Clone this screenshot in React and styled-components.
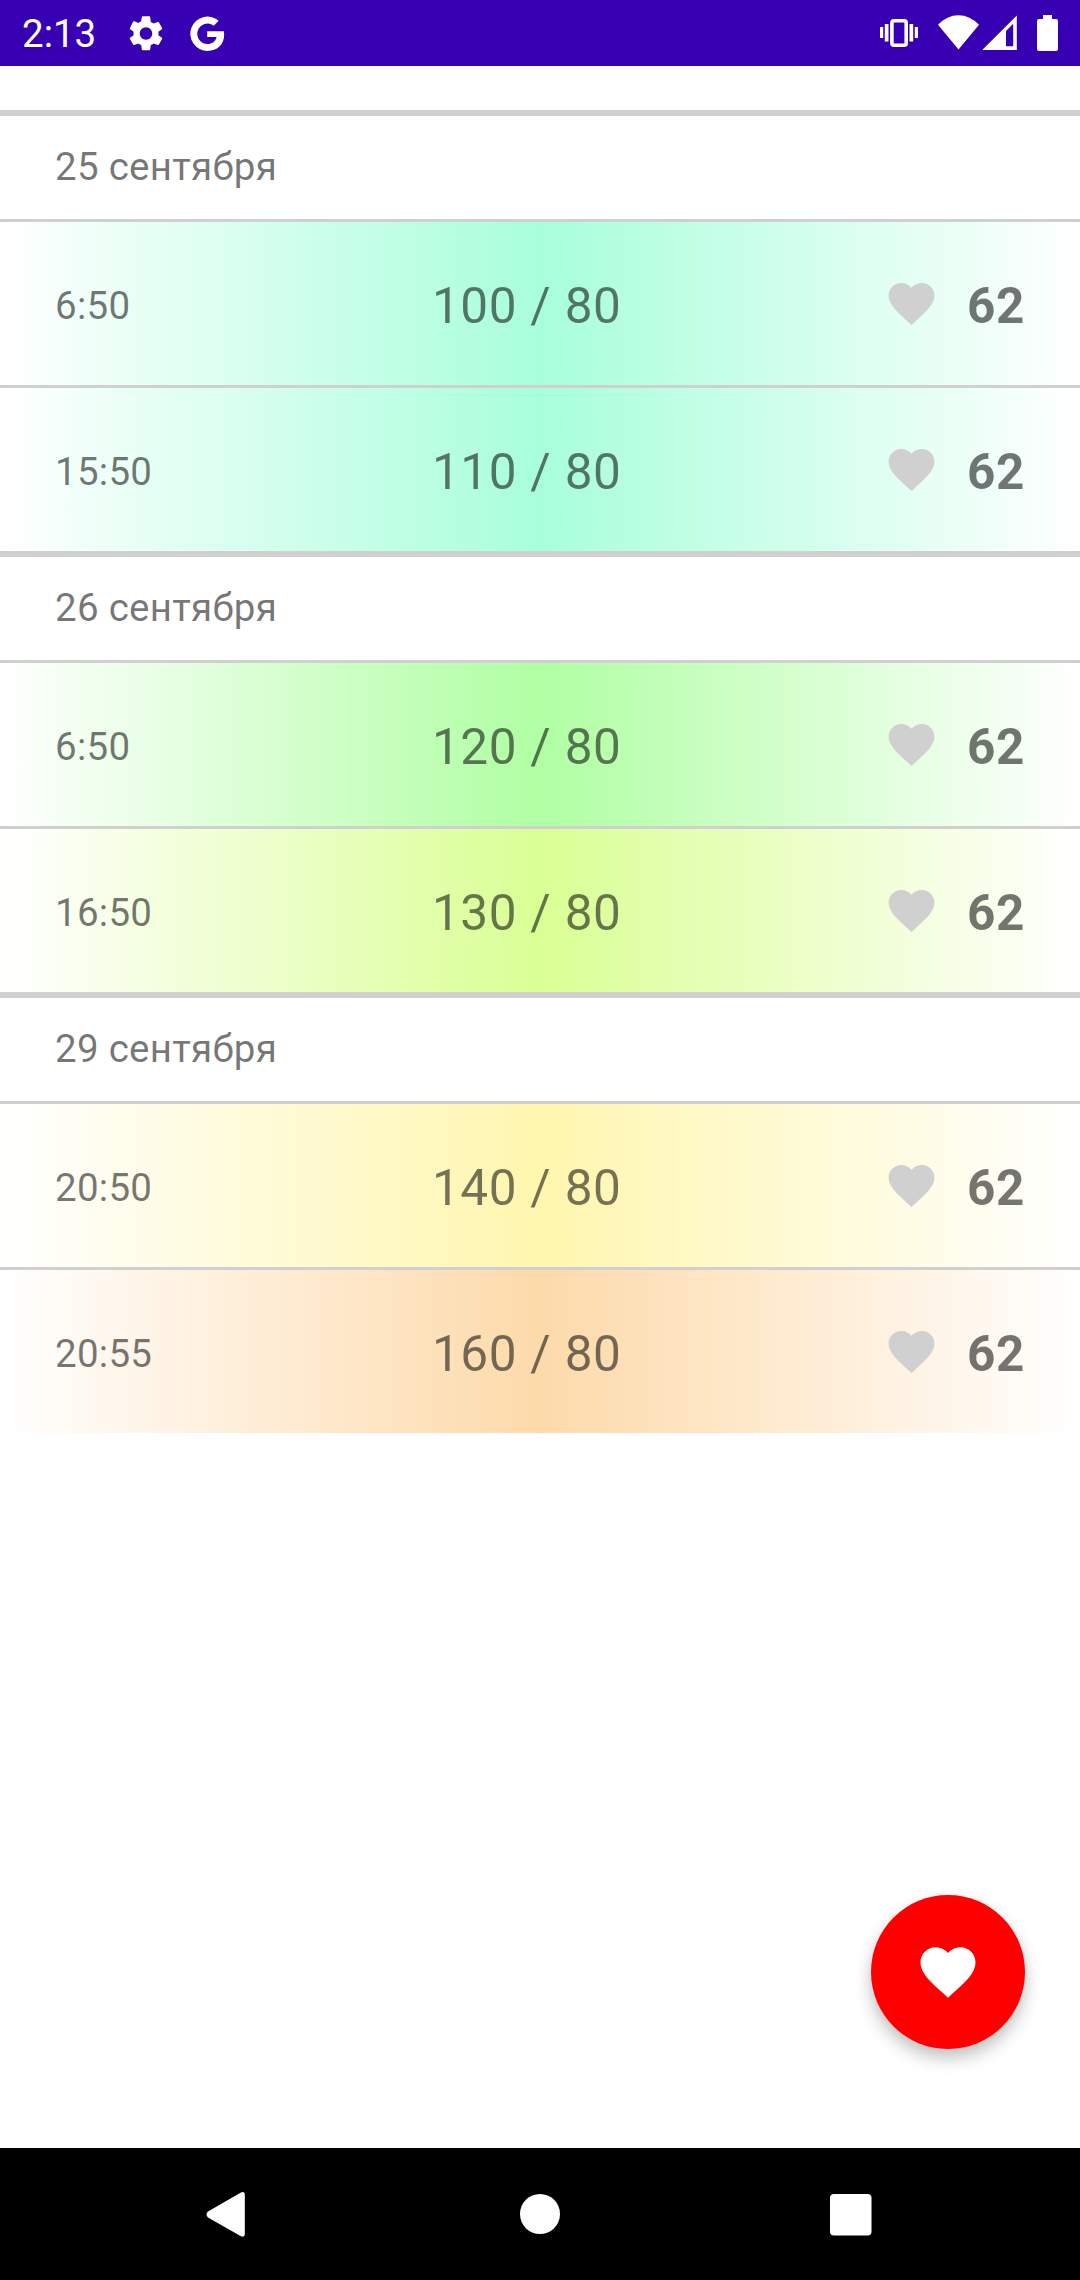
import React from "react";
import styled, { createGlobalStyle } from "styled-components";

const GlobalStyle = createGlobalStyle`
  body { margin: 0; background: #fff; font-family: Roboto, "Noto Sans", sans-serif; }
  * { box-sizing: border-box; }
`;

const Screen = styled.div`
  display: flex;
  flex-direction: column;
  width: 1080px;
  height: 2280px;
  background: #fff;
  position: relative;
  overflow: hidden;
`;

const StatusBar = styled.header`
  display: flex;
  align-items: center;
  height: 66px;
  flex: none;
  padding: 0 22px;
  background: #3700b3;
  color: #fff;
`;

const Clock = styled.span`
  font-size: 38.5px;
  line-height: 66px;
  width: 107px;
  padding-top: 2px;
`;

const StatusIcon = styled.svg`
  display: block;
  flex: none;
  width: ${(p) => p.$w}px;
  height: ${(p) => p.$h || p.$w}px;
  margin-left: ${(p) => p.$gap || 0}px;
  fill: currentColor;
`;

const Spacer = styled.div`
  flex: 1;
`;

const List = styled.main`
  flex: 1;
  padding-top: 44px;
`;

const DayHeader = styled.h2`
  margin: 0;
  height: 109px;
  border-top: 6px solid #d0d0d0;
  padding-left: 55px;
  font-size: 38.5px;
  font-weight: 400;
  line-height: 102px;
  letter-spacing: 0.28px;
  color: rgba(0, 0, 0, 0.54);
`;

const Row = styled.div`
  display: grid;
  grid-template-columns: 377px 452px 1fr;
  align-items: center;
  height: 166px;
  padding: 0 55px;
  border-top: 3px solid #d0d0d0;
  background: linear-gradient(90deg, #fff, ${(p) => p.$color} 50%, #fff) padding-box;
  color: rgba(0, 0, 0, 0.54);
`;

const Time = styled.span`
  font-size: 38.5px;
  line-height: 45px;
  letter-spacing: 0.28px;
  padding-top: 4px;
`;

const Pressure = styled.span`
  font-size: 49.5px;
  line-height: 58px;
  letter-spacing: 0.5px;
  word-spacing: 0.6px;
  padding-top: 4px;
`;

const Pulse = styled.span`
  display: flex;
  align-items: center;
  justify-content: space-between;
  font-size: 49.5px;
  font-weight: 700;
  line-height: 58px;
  letter-spacing: 0.6px;
`;

const PulseValue = styled.span`
  padding-top: 4px;
`;

const HeartSvg = styled.svg`
  display: block;
  width: ${(p) => p.$size}px;
  height: ${(p) => p.$size}px;
  fill: ${(p) => p.$fill};
`;

const Fab = styled.button`
  position: absolute;
  right: 55px;
  bottom: 231px;
  width: 154px;
  height: 154px;
  border: 0;
  padding: 0;
  border-radius: 50%;
  background: #f00;
  display: flex;
  align-items: center;
  justify-content: center;
  box-shadow: 0 9px 17px rgba(0, 0, 0, 0.24), 0 1px 10px rgba(0, 0, 0, 0.04);
`;

const NavBar = styled.nav`
  display: flex;
  align-items: center;
  justify-content: center;
  gap: 179px;
  height: 132px;
  flex: none;
  background: #000;
`;

const NavIcon = styled.svg`
  display: block;
  width: 132px;
  height: 132px;
  fill: #fff;
`;

const Heart = ({ size, fill }) => (
  <HeartSvg viewBox="0 0 24 24" $size={size} $fill={fill}>
    <path d="M12,21.35l-1.45,-1.32C5.4,15.36 2,12.28 2,8.5 2,5.42 4.42,3 7.5,3c1.74,0 3.41,0.81 4.5,2.09C13.09,3.81 14.76,3 16.5,3 19.58,3 22,5.42 22,8.5c0,3.78 -3.4,6.86 -8.55,11.54L12,21.35z" />
  </HeartSvg>
);

const days = [
  {
    date: "25 сентября",
    rows: [
      { time: "6:50", value: "100 / 80", pulse: 62, color: "#a8ffdb" },
      { time: "15:50", value: "110 / 80", pulse: 62, color: "#a8ffdb" },
    ],
  },
  {
    date: "26 сентября",
    rows: [
      { time: "6:50", value: "120 / 80", pulse: 62, color: "#b0ffa3" },
      { time: "16:50", value: "130 / 80", pulse: 62, color: "#daff94" },
    ],
  },
  {
    date: "29 сентября",
    rows: [
      { time: "20:50", value: "140 / 80", pulse: 62, color: "#fff6ae" },
      { time: "20:55", value: "160 / 80", pulse: 62, color: "#fddaaa" },
    ],
  },
];

export default function App() {
  return (
    <Screen>
      <GlobalStyle />
      <StatusBar>
        <Clock>2:13</Clock>
        <StatusIcon $w={34} $h={35} viewBox="2.2 2 19.6 20">
          <path d="M19.14 12.94c.04-.3.06-.61.06-.94 0-.32-.02-.64-.07-.94l2.03-1.58c.18-.14.23-.41.12-.61l-1.92-3.32c-.12-.22-.37-.29-.59-.22l-2.39.96c-.5-.38-1.03-.7-1.62-.94L14.4 2.41c-.04-.24-.24-.41-.48-.41h-3.84c-.24 0-.43.17-.47.41l-.36 2.54c-.59.24-1.13.57-1.62.94l-2.39-.96c-.22-.08-.47 0-.59.22L2.74 8.87c-.12.21-.08.47.12.61l2.03 1.58c-.05.3-.09.63-.09.94s.02.64.07.94l-2.03 1.58c-.18.14-.23.41-.12.61l1.92 3.32c.12.22.37.29.59.22l2.39-.96c.5.38 1.03.7 1.62.94l.36 2.54c.05.24.24.41.48.41h3.84c.24 0 .44-.17.47-.41l.36-2.54c.59-.24 1.13-.56 1.62-.94l2.39.96c.22.08.47 0 .59-.22l1.92-3.32c.12-.22.07-.47-.12-.61l-2.01-1.58zM12 15.6c-1.98 0-3.6-1.62-3.6-3.6s1.62-3.6 3.6-3.6 3.6 1.62 3.6 3.6-1.62 3.6-3.6 3.6z" />
        </StatusIcon>
        <StatusIcon $w={35} $h={35} $gap={27} viewBox="0 0 35 35">
          <path d="M33.9 15.2H17.2V21H26.6C25.6 25.4 22 28 17.5 28A10.2 10.2 0 1 1 23.8 9.800L28.700 4.700A17.200 17.200 0 1 0 17.500 35C28.200 35 35.600 27.500 33.900 15.200Z" />
        </StatusIcon>
        <Spacer />
        <StatusIcon $w={40} $h={30} viewBox="0 0 40 30">
          <path d="M1 9h3.200v11H1zM5.800 6h3.700v17.500H5.800zM30.500 6h3.700v17.500h-3.700zM35.800 9H39v11h-3.200z" />
          <rect x="12.900" y="2.700" width="14.300" height="24.500" rx="2" fill="none" stroke="#fff" strokeWidth="3.600" />
        </StatusIcon>
        <StatusIcon $w={42} $h={36} $gap={19} viewBox="0 0 42 36">
          <path d="M0 9.800Q9 .2 20.500 .2T41 9.800L20.500 34.500z" />
        </StatusIcon>
        <StatusIcon $w={36} $h={36} $gap={2} viewBox="0 0 36 36">
          <path fillRule="evenodd" d="M.2 35 34.800 .5V35zM24 31.300H31.200V8.800L24 16z" />
        </StatusIcon>
        <StatusIcon $w={21} $h={36} $gap={19} viewBox="0 0 21 36">
          <path d="M6 0h9v4h4q2 0 2 2v28q0 2-2 2H2q-2 0-2-2V6q0-2 2-2h4z" />
        </StatusIcon>
      </StatusBar>
      <List>
        {days.map((day) => (
          <section key={day.date}>
            <DayHeader>{day.date}</DayHeader>
            {day.rows.map((r) => (
              <Row key={r.time} $color={r.color}>
                <Time>{r.time}</Time>
                <Pressure>{r.value}</Pressure>
                <Pulse>
                  <Heart size={55} fill="#d0d0d0" />
                  <PulseValue>{r.pulse}</PulseValue>
                </Pulse>
              </Row>
            ))}
          </section>
        ))}
      </List>
      <NavBar>
        <NavIcon viewBox="0 0 132 132">
          <path d="M45 63.500 77.500 44.700Q81.800 42.500 81.800 47V86Q81.800 90 77.500 88L45 69.500Q42 66.500 45 63.500z" />
        </NavIcon>
        <NavIcon viewBox="0 0 132 132">
          <circle cx="66" cy="66" r="20" />
        </NavIcon>
        <NavIcon viewBox="0 0 132 132">
          <rect x="45" y="46" width="41.500" height="41.500" rx="4" />
        </NavIcon>
      </NavBar>
      <Fab aria-label="Добавить">
        <Heart size={66} fill="#fff" />
      </Fab>
    </Screen>
  );
}
